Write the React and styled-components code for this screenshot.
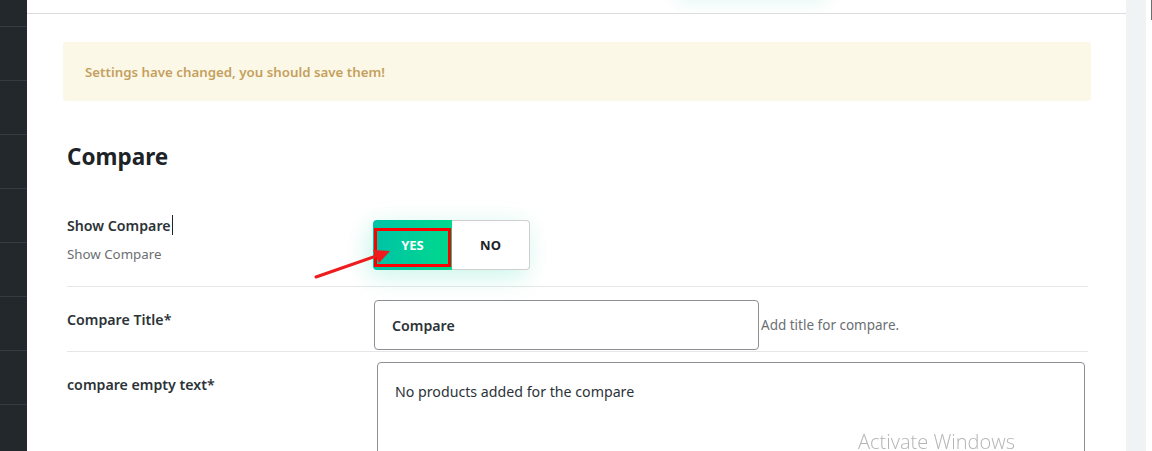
import React from 'react';
import styled, { createGlobalStyle } from 'styled-components';

const Global = createGlobalStyle`
    html, body {
        margin: 0;
        padding: 0;
        height: 100%;
        overflow: hidden;
        background: #fff;
        font-family: "Noto Sans", "Open Sans", sans-serif;
        color: #1d2327;
    }
    #root {
        height: 100%;
    }
`;

const Page = styled.div`
    display: flex;
    height: 100vh;
`;

const Sidebar = styled.div`
    width: 27px;
    flex-shrink: 0;
    background: #23282d;
    display: flex;
    flex-direction: column;
`;

const SideItem = styled.div`
    height: ${p => p.$h}px;
    flex-shrink: 0;
    border-bottom: 1px solid #363b41;
`;

const Main = styled.div`
    flex: 1;
    display: flex;
    flex-direction: column;
    min-width: 0;
`;

const Header = styled.div`
    position: relative;
    height: 13px;
    flex-shrink: 0;
    border-bottom: 1px solid #dcdcde;
    overflow: hidden;
`;

const HeaderGlow = styled.div`
    position: absolute;
    left: 650px;
    top: -40px;
    width: 150px;
    height: 38px;
    border-radius: 6px;
    box-shadow: 0 4px 18px rgba(0, 200, 160, 0.12);
`;

const Content = styled.div`
    padding: 28px 35px 0 36px;
`;

const Notice = styled.div`
    height: 59px;
    display: flex;
    align-items: center;
    padding: 0 22px;
    background: #fcf8e8;
    border-radius: 3px;
    color: #c4a05e;
    font-size: 13.3px;
    font-weight: 600;
`;

const Heading = styled.h2`
    margin: 41px 0 33px 4px;
    font-size: 22.5px;
    line-height: 30px;
    font-weight: 700;
    color: #1d2327;
`;

const Form = styled.div`
    margin: 0 3px 0 4px;
`;

const Row = styled.div`
    display: flex;
    align-items: flex-start;
    padding: ${p => p.$top}px 0 ${p => p.$bottom}px;
    border-bottom: ${p => (p.$last ? 'none' : '1px solid #e6e6e6')};
`;

const LabelCol = styled.div`
    width: 306px;
    flex-shrink: 0;
    margin-top: ${p => p.$offset || 0}px;
`;

const Label = styled.div`
    font-size: 14.2px;
    line-height: 20px;
    font-weight: 600;
    color: #2c3338;
`;

const Caret = styled.span`
    display: inline-block;
    width: 1px;
    height: 20px;
    margin-left: 1px;
    vertical-align: -4px;
    background: #1d2327;
`;

const Desc = styled.div`
    margin-top: 8px;
    font-size: 13.3px;
    line-height: 20px;
    color: #6b6f73;
`;

const Field = styled.div`
    position: relative;
    display: flex;
    align-items: center;
    margin-top: ${p => p.$offset || 0}px;
    margin-left: ${p => p.$shift || 0}px;
    margin-right: ${p => p.$end || 0}px;
    flex: ${p => (p.$grow ? 1 : 'none')};
`;

const Toggle = styled.div`
    display: flex;
    height: 50px;
    border-radius: 4px;
    box-shadow: -4px 6px 24px rgba(0, 210, 160, 0.22);
`;

const ToggleOption = styled.div`
    width: ${p => p.$w}px;
    box-sizing: border-box;
    display: flex;
    align-items: center;
    justify-content: center;
    font-size: 13px;
    font-weight: 700;
    color: ${p => (p.$active ? '#fff' : '#1d2327')};
    background: ${p => (p.$active ? 'linear-gradient(90deg, #00c3a6, #00d98d)' : '#fff')};
    border: ${p => (p.$active ? 'none' : '1px solid #cfcfcf')};
    border-left: none;
    border-radius: ${p => (p.$active ? '4px 0 0 4px' : '0 4px 4px 0')};
`;

const Highlight = styled.div`
    position: absolute;
    left: 1px;
    top: 8px;
    width: 77px;
    height: 39px;
    box-sizing: border-box;
    border: 3px solid #ff0000;
    pointer-events: none;
`;

const Arrow = styled.svg`
    position: absolute;
    left: -60px;
    top: 25px;
    overflow: visible;
    pointer-events: none;
`;

const Input = styled.div`
    width: 385px;
    height: 50px;
    box-sizing: border-box;
    display: flex;
    align-items: center;
    padding: 0 17px;
    border: 1px solid #8c8f94;
    border-radius: 4px;
    font-size: 14.2px;
    font-weight: 600;
    color: #2c3338;
`;

const Hint = styled.span`
    margin-left: 2px;
    font-size: 13.5px;
    color: #6b6f73;
`;

const TextArea = styled.div`
    flex: 1;
    height: 140px;
    box-sizing: border-box;
    padding: 19px 17px;
    border: 1px solid #8c8f94;
    border-radius: 4px;
    font-size: 14.2px;
    line-height: 20px;
    color: #2c3338;
`;

const Gutter = styled.div`
    width: 20px;
    flex-shrink: 0;
    background: #f0f3f4;
`;

const ScrollTrack = styled.div`
    width: 6px;
    flex-shrink: 0;
    background: #fff;
    display: flex;
`;

const ScrollThumb = styled.div`
    width: 1px;
    height: 20px;
    margin-left: auto;
    background: #6e6e6e;
`;

const Watermark = styled.div`
    position: fixed;
    left: 858px;
    top: 431px;
    font-family: "Open Sans", "Noto Sans", sans-serif;
    font-weight: 300;
    font-size: 20px;
    line-height: 22px;
    color: #b4b4b4;
    pointer-events: none;
`;

const sideHeights = [26, 53, 53, 53, 53, 53, 53, 53, 60];

export default function App() {
    return (
        <Page>
            <Global />
            <Sidebar>
                {sideHeights.map((h, i) => (
                    <SideItem key={i} $h={h} />
                ))}
            </Sidebar>

            <Main>
                <Header>
                    <HeaderGlow />
                </Header>
                <Content>
                    <Notice>Settings have changed, you should save them!</Notice>
                    <Heading>Compare</Heading>

                    <Form>
                        <Row $top={10} $bottom={16}>
                            <LabelCol>
                                <Label>Show Compare<Caret /></Label>
                                <Desc>Show Compare</Desc>
                            </LabelCol>
                            <Field $offset={5}>
                                <Toggle>
                                    <ToggleOption $active $w={79}>YES</ToggleOption>
                                    <ToggleOption $w={78}>NO</ToggleOption>
                                </Toggle>
                                <Highlight />
                                <Arrow width="80" height="32" viewBox="0 0 80 32">
                                    <line x1="3" y1="32" x2="66" y2="10" stroke="#ee1c1c" strokeWidth="3" strokeLinecap="round" />
                                    <polygon points="77,6 60,5 66,18" fill="#ee1c1c" />
                                </Arrow>
                            </Field>
                        </Row>

                        <Row $top={13} $bottom={1}>
                            <LabelCol $offset={10}>
                                <Label>Compare Title*</Label>
                            </LabelCol>
                            <Field $shift={1}>
                                <Input>Compare</Input>
                                <Hint>Add title for compare.</Hint>
                            </Field>
                        </Row>

                        <Row $top={10} $bottom={0} $last>
                            <LabelCol $offset={13}>
                                <Label>compare empty text*</Label>
                            </LabelCol>
                            <Field $grow $shift={4} $end={3}>
                                <TextArea>No products added for the compare</TextArea>
                            </Field>
                        </Row>
                    </Form>
                </Content>
            </Main>

            <Gutter />
            <ScrollTrack>
                <ScrollThumb />
            </ScrollTrack>
            <Watermark>Activate Windows</Watermark>
        </Page>
    );
}
